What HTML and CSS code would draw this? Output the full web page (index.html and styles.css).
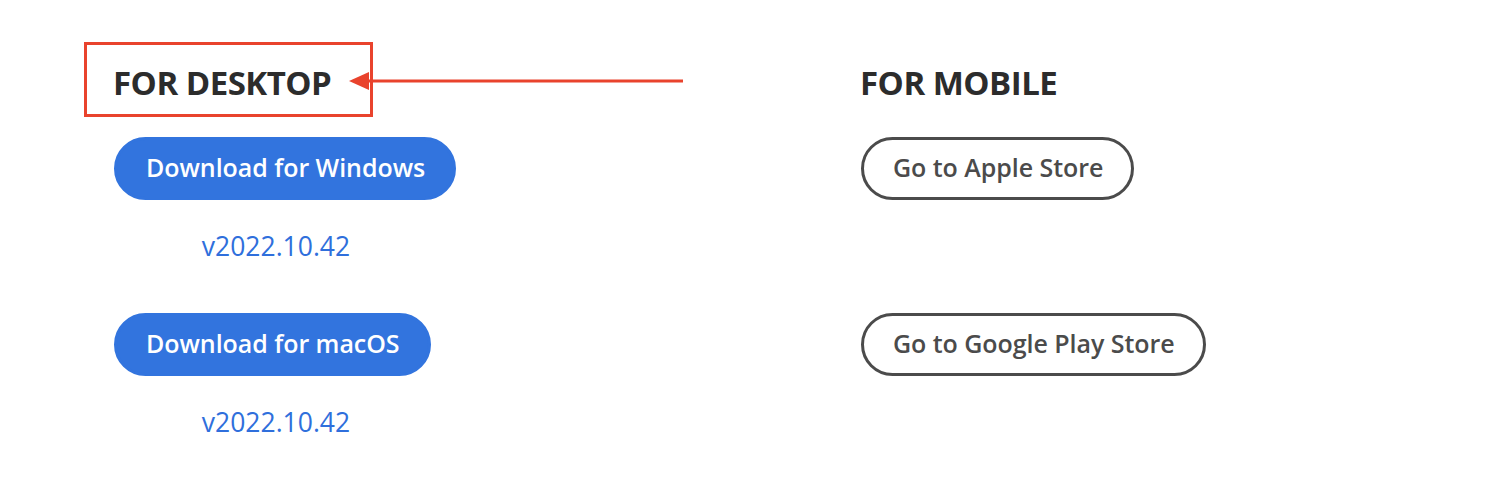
FILE: index.html
```html
<!DOCTYPE html>
<html lang="en">
<head>
<meta charset="utf-8">
<title>Downloads</title>
<link rel="stylesheet" href="styles.css">
</head>
<body>
<main class="page">
  <section class="col col-desktop">
    <h2 class="heading">FOR DESKTOP</h2>
    <div class="group">
      <a class="btn btn-primary" href="#">Download for Windows</a>
      <a class="version" href="#">v2022.10.42</a>
    </div>
    <div class="group">
      <a class="btn btn-primary" href="#">Download for macOS</a>
      <a class="version" href="#">v2022.10.42</a>
    </div>
    <div class="highlight-box"></div>
    <svg class="arrow" width="340" height="24" viewBox="0 0 340 24" aria-hidden="true">
      <polygon points="0,12 20,3 20,21" fill="#e9432d"/>
      <rect x="18" y="10.5" width="316" height="3" fill="#e9432d"/>
    </svg>
  </section>
  <section class="col col-mobile">
    <h2 class="heading">FOR MOBILE</h2>
    <div class="group">
      <a class="btn btn-outline" href="#">Go to Apple Store</a>
    </div>
    <div class="group group-second">
      <a class="btn btn-outline" href="#">Go to Google Play Store</a>
    </div>
  </section>
</main>
</body>
</html>
```

FILE: styles.css
```css
* { box-sizing: border-box; }
html, body { margin: 0; padding: 0; background: #ffffff; }
body {
  font-family: "Open Sans", "Noto Sans", sans-serif;
  color: #2c2c2c;
}
.page {
  display: grid;
  grid-template-columns: 747px auto;
  padding: 63px 0 0 114px;
  height: 478px;
}
.col {
  position: relative;
  display: flex;
  flex-direction: column;
  align-items: flex-start;
}
.heading {
  margin: 0 0 34px -1px;
  font-size: 33px;
  line-height: 40px;
  font-weight: 700;
  color: #2c2c2c;
  letter-spacing: -0.5px;
}
.group {
  display: flex;
  flex-direction: column;
  align-items: flex-start;
  width: 324px;
}
.group + .group { margin-top: 49px; }
.col-mobile .group-second { margin-top: 113px; }
.btn {
  display: inline-flex;
  align-items: center;
  height: 63px;
  padding: 0 28px 3px 29px;
  border: 3px solid transparent;
  border-radius: 32px;
  font-size: 25px;
  font-weight: 600;
  text-decoration: none;
  white-space: nowrap;
  letter-spacing: -0.05px;
}
.btn-primary {
  background: #3274de;
  border-color: #3274de;
  color: #ffffff;
}
.btn-outline {
  background: #ffffff;
  border-color: #4b4b4b;
  color: #4b4b4b;
}
.version {
  align-self: stretch;
  margin-top: 28px;
  text-align: center;
  font-size: 26.5px;
  line-height: 36px;
  color: #2f6fdc;
  text-decoration: none;
}
.highlight-box {
  position: absolute;
  left: -30px;
  top: -21px;
  width: 289px;
  height: 75px;
  border: 3px solid #e9432d;
}
.arrow {
  position: absolute;
  left: 235px;
  top: 6px;
}
```
